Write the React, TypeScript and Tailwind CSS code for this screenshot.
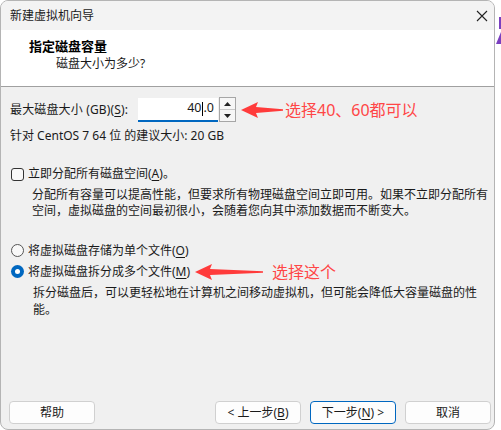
import React from "react";

const font = { fontFamily: '"Noto Sans", "Noto Sans CJK SC", sans-serif' };

function U({ c }: { c: string }) {
  return <span className="underline underline-offset-2">{c}</span>;
}

function Arrow({ w }: { w: number }) {
  return (
    <svg width={w} height="18" viewBox={`0 0 ${w} 18`} className="shrink-0">
      <path
        d={`M0 9 L17 1 L15 6 L${w} 8.2 L${w} 9.8 L15 12 L17 17 Z`}
        fill="#ff3b3b"
      />
    </svg>
  );
}

function Btn({ children, primary }: { children: React.ReactNode; primary?: boolean }) {
  return (
    <div
      className={`w-[86px] h-[23px] flex items-center justify-center rounded-[4px] bg-[#fdfdfd] text-[12px] text-[#1a1a1a] border ${
        primary ? "border-[#0067c0]" : "border-[#d0d0d0]"
      }`}
    >
      {children}
    </div>
  );
}

export default function App() {
  return (
    <div className="w-[501px] h-[430px] bg-white flex overflow-hidden" style={font}>
      <div className="w-[495px] h-[430px] shrink-0 flex flex-col border border-[#b4b4b4] rounded-lg overflow-hidden bg-[#f0f0f0]">
        {/* title bar */}
        <div className="h-[29px] shrink-0 bg-[#f3f3f3] flex items-center justify-between pl-[9px] pr-[6px]">
          <span className="text-[12px] text-[#1a1a1a]">新建虚拟机向导</span>
          <svg width="12" height="12" viewBox="0 0 12 12">
            <path d="M1 1 L11 11 M11 1 L1 11" stroke="#222" strokeWidth="1.1" />
          </svg>
        </div>
        {/* header */}
        <div className="h-[57px] shrink-0 bg-white border-b border-[#a0a0a0] pl-[28px] pt-[7px]">
          <div className="text-[13px] font-bold leading-[18px] text-black">指定磁盘容量</div>
          <div className="text-[12px] leading-[18px] text-[#1a1a1a] pl-[27px]">磁盘大小为多少?</div>
        </div>
        {/* body */}
        <div className="flex-1 flex flex-col text-[12px] text-[#1a1a1a]">
          <div className="mt-[10px] h-[25px] flex items-center pl-[9px]">
            <span className="w-[128px] tracking-[0.15px]">
              最大磁盘大小 (GB)(<U c="S" />):
            </span>
            <div className="w-[80px] h-[24px] bg-white border-b-2 border-[#0067c0] flex items-center justify-end pr-[4px] text-[12.5px]">
              40<span className="inline-block w-px h-[14px] bg-black mx-[0.5px]" />.0
            </div>
            <div className="w-[17px] h-[25px] ml-px border border-[#a6a6a6] flex flex-col bg-[#f6f6f6]">
              <div className="flex-1 flex items-center justify-center border-b border-[#c8c8c8]">
                <svg width="7" height="4" viewBox="0 0 7 4"><path d="M0 4 L3.5 0 L7 4 Z" fill="#222" /></svg>
              </div>
              <div className="flex-1 flex items-center justify-center">
                <svg width="7" height="4" viewBox="0 0 7 4"><path d="M0 0 L3.5 4 L7 0 Z" fill="#222" /></svg>
              </div>
            </div>
            <div className="ml-[5px]">
              <Arrow w={42} />
            </div>
            <span className="ml-[2px] text-[16px] text-[#ff4646]">选择40、60都可以</span>
          </div>
          <div className="mt-[6px] leading-[16px] pl-[9px]">针对 CentOS 7 64 位 的建议大小: 20 GB</div>

          <div className="mt-[22px] h-[16px] flex items-center pl-[10px]">
            <span className="w-[13px] h-[13px] border border-[#333] rounded-[3px] bg-[#f8f8f8]" />
            <span className="ml-[4px]">
              立即分配所有磁盘空间(<U c="A" />)。
            </span>
          </div>
          <div className="mt-[5px] leading-[16px] pl-[31px] whitespace-nowrap">
            <div>分配所有容量可以提高性能，但要求所有物理磁盘空间立即可用。如果不立即分配所有</div>
            <div>空间，虚拟磁盘的空间最初很小，会随着您向其中添加数据而不断变大。</div>
          </div>

          <div className="mt-[21px] h-[21px] flex items-center pl-[10px]">
            <span className="w-[13px] h-[13px] border border-[#555] rounded-full bg-[#f8f8f8]" />
            <span className="ml-[4px]">
              将虚拟磁盘存储为单个文件(<U c="O" />)
            </span>
          </div>
          <div className="h-[21px] flex items-center pl-[10px]">
            <span className="w-[13px] h-[13px] rounded-full bg-[#0067c0] flex items-center justify-center">
              <span className="w-[5px] h-[5px] rounded-full bg-white" />
            </span>
            <span className="ml-[4px]">
              将虚拟磁盘拆分成多个文件(<U c="M" />)
            </span>
            <div className="ml-[5px]">
              <Arrow w={68} />
            </div>
            <span className="ml-[9px] text-[16px] text-[#ff4646]">选择这个</span>
          </div>
          <div className="mt-[2px] leading-[17px] pl-[32px] whitespace-nowrap">
            <div>拆分磁盘后，可以更轻松地在计算机之间移动虚拟机，但可能会降低大容量磁盘的性</div>
            <div>能。</div>
          </div>

          <div className="mt-auto mb-[5px] flex items-center pl-[8px] pr-[3px]">
            <Btn>帮助</Btn>
            <div className="flex-1" />
            <div className="flex gap-[9px]">
              <Btn>
                &lt; 上一步(<U c="B" />)
              </Btn>
              <Btn primary>
                下一步(<U c="N" />) &gt;
              </Btn>
              <Btn>取消</Btn>
            </div>
          </div>
        </div>
      </div>
      <div className="flex-1 flex flex-col items-end pt-[17px]">
        <div className="w-[2px] h-[12px] bg-[#7a3fc0]" />
        <svg width="5" height="12" viewBox="0 0 5 12" className="mt-[3px]">
          <path d="M5 0 L5 12 L0 12 Z" fill="#7a3fc0" />
        </svg>
      </div>
    </div>
  );
}
